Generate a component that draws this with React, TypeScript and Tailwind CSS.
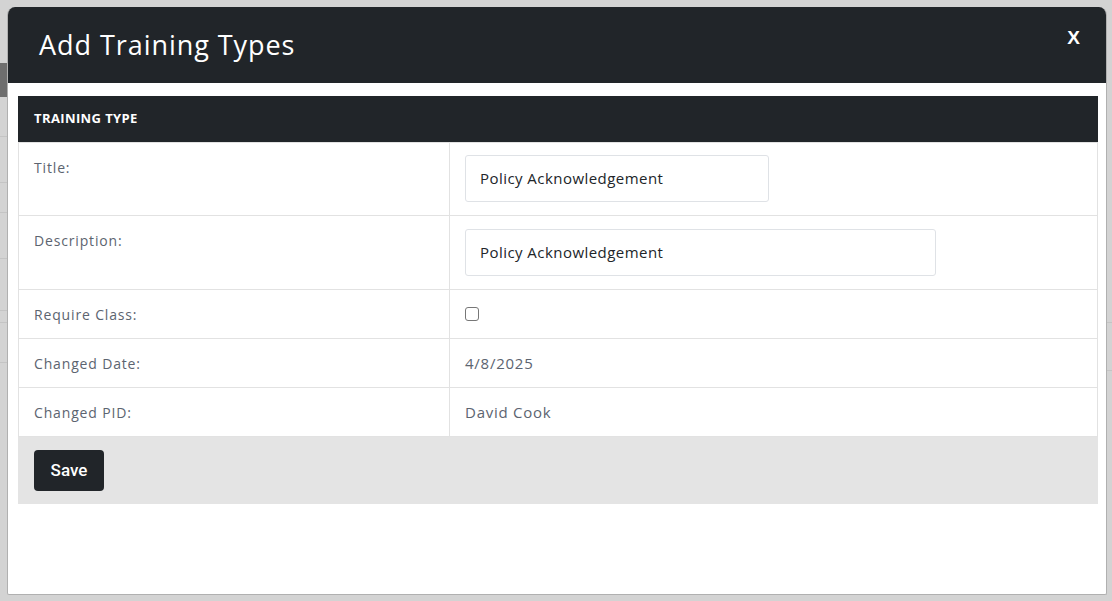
const rows = [
  { label: "Title:", kind: "input", value: "Policy Acknowledgement", width: "w-[304px]", pad: "pt-[12px]" },
  { label: "Description:", kind: "input", value: "Policy Acknowledgement", width: "w-[471px]", pad: "pt-[13px]" },
  { label: "Require Class:", kind: "checkbox" },
  { label: "Changed Date:", kind: "text", value: "4/8/2025" },
  { label: "Changed PID:", kind: "text", value: "David Cook" },
] as const;

function Backdrop() {
  return (
    <div className="pointer-events-none absolute inset-0">
      <div className="absolute left-0 top-[63px] h-[34px] w-[8px] bg-[#6e6e6e]" />
      <div className="absolute left-0 top-[136px] h-px w-[8px] bg-[#c4c4c4]" />
      <div className="absolute left-0 top-[182px] h-px w-[8px] bg-[#c4c4c4]" />
      <div className="absolute left-0 top-[212px] h-px w-[8px] bg-[#c4c4c4]" />
      <div className="absolute left-0 top-[258px] h-px w-[8px] bg-[#c4c4c4]" />
      <div className="absolute left-0 top-[310px] h-px w-[8px] bg-[#c4c4c4]" />
      <div className="absolute left-0 top-[322px] h-px w-[8px] bg-[#c4c4c4]" />
      <div className="absolute left-0 top-[362px] h-px w-[8px] bg-[#c4c4c4]" />
      <div className="absolute right-0 top-[322px] h-px w-[6px] bg-[#c4c4c4]" />
      <div className="absolute right-0 top-[370px] h-px w-[6px] bg-[#c4c4c4]" />
    </div>
  );
}

export default function App() {
  return (
    <div
      className="relative h-[601px] w-full overflow-hidden bg-[#d3d3d3] pl-[7px] pt-[7px]"
      style={{ fontFamily: '"Open Sans", "Noto Sans", sans-serif' }}
    >
      <Backdrop />
      <div className="relative flex h-[588px] w-[1100px] flex-col overflow-hidden rounded-t-[8px] rounded-b-[2px] border border-t-0 border-[#b0b0b0] bg-white">
        <div className="relative flex h-[76px] items-center bg-[#212529] pb-[2px] pl-[31px]">
          <h1 className="text-[27px] leading-none tracking-[0.035em] text-white">Add Training Types</h1>
          <span
            className="absolute right-[26px] top-[17px] text-[19px] font-bold text-white"
            style={{ fontFamily: '"Liberation Sans", Arial, sans-serif' }}
          >
            X
          </span>
        </div>

        <div className="pl-[10px] pr-[8px] pt-[13px]">
          <div className="flex h-[46px] items-center bg-[#212529] pl-[16px]">
            <span className="text-[13px] font-bold uppercase tracking-[0.03em] text-white">Training Type</span>
          </div>

          <div className="border-b border-l border-r border-[#e2e2e2]">
            {rows.map((row) => (
              <div key={row.label} className="grid grid-cols-[431px_1fr] border-t border-[#e2e2e2]">
                <div className="border-r border-[#e2e2e2] pb-[13px] pl-[15px] pt-[14px] text-[14px] leading-[21px] tracking-[0.06em] text-[#5c6470]">
                  {row.label}
                </div>
                <div className="pl-[15px]">
                  {row.kind === "input" && (
                    <div className={`${row.pad} pb-[13px]`}>
                      <div
                        className={`${row.width} flex h-[47px] items-center rounded-[3px] border border-[#dfe2e6] pl-[14px] text-[15px] tracking-[0.03em] text-[#212529]`}
                      >
                        {row.value}
                      </div>
                    </div>
                  )}
                  {row.kind === "checkbox" && (
                    <div className="flex h-[48px] items-center">
                      <span className="block h-[14px] w-[14px] rounded-[3px] border border-[#777]" />
                    </div>
                  )}
                  {row.kind === "text" && (
                    <div className="pb-[13px] pt-[14px] text-[15px] leading-[21px] tracking-[0.05em] text-[#5c6470]">
                      {row.value}
                    </div>
                  )}
                </div>
              </div>
            ))}
          </div>

          <div className="bg-[#e4e4e4] py-[13px] pl-[16px]">
            <button
              type="button"
              className="h-[41px] w-[70px] rounded-[4px] bg-[#212529] text-[17px] font-medium text-white"
              style={{ fontFamily: 'Roboto, "Liberation Sans", sans-serif' }}
            >
              Save
            </button>
          </div>
        </div>
      </div>
    </div>
  );
}
